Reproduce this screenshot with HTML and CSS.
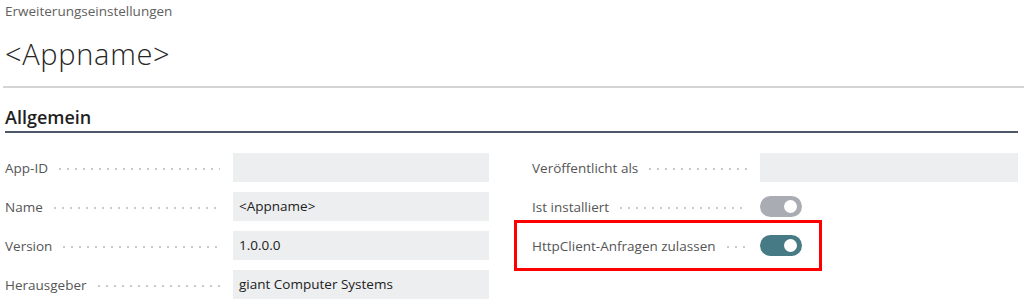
FILE: index.html
```html
<!DOCTYPE html>
<html lang="de">
<head>
<meta charset="utf-8">
<title>Erweiterungseinstellungen</title>
<link rel="stylesheet" href="styles.css">
</head>
<body>
<div class="page">
  <header class="head">
    <div class="crumb">Erweiterungseinstellungen</div>
    <h1 class="title">&lt;Appname&gt;</h1>
  </header>
  <section class="group">
    <h2 class="group-title">Allgemein</h2>
    <div class="cols">
      <div class="col">
        <div class="row"><span class="label">App-ID</span><span class="field"></span></div>
        <div class="row"><span class="label">Name</span><span class="field">&lt;Appname&gt;</span></div>
        <div class="row"><span class="label">Version</span><span class="field">1.0.0.0</span></div>
        <div class="row"><span class="label">Herausgeber</span><span class="field">giant Computer Systems</span></div>
      </div>
      <div class="col">
        <div class="row"><span class="label">Veröffentlicht als</span><span class="field"></span></div>
        <div class="row"><span class="label">Ist installiert</span><span class="switch off"><span class="knob"></span></span></div>
        <div class="row highlight"><span class="label">HttpClient-Anfragen zulassen</span><span class="switch on"><span class="knob"></span></span></div>
      </div>
    </div>
  </section>
</div>
</body>
</html>
```

FILE: styles.css
```css
html, body {
  margin: 0;
  padding: 0;
  background: #ffffff;
}
body {
  font-family: "Open Sans", "Liberation Sans", sans-serif;
  color: #212121;
  overflow: hidden;
}
.page {
  padding: 0 6px 0 5px;
}
.head {
  border-bottom: 2px solid #d5d5d8;
  margin-left: -2px;
  margin-right: -6px;
  padding-left: 2px;
  height: 88px;
  box-sizing: border-box;
}
.crumb {
  font-size: 13.5px;
  color: #616161;
  line-height: 18px;
  padding-top: 2px;
}
.title {
  margin: 0;
  font-weight: 300;
  font-size: 29px;
  letter-spacing: 0.7px;
  line-height: 38px;
  padding-top: 15px;
  color: #262626;
}
.group-title {
  margin: 0;
  font-size: 18px;
  font-weight: 600;
  line-height: 24px;
  padding-top: 17px;
  padding-bottom: 2px;
  border-bottom: 2px solid #4e586b;
  color: #1f1f1f;
}
.cols {
  display: grid;
  grid-template-columns: 484px 486px;
  column-gap: 43px;
  padding-top: 20px;
}
.col {
  display: flex;
  flex-direction: column;
  gap: 10px;
}
.row {
  display: flex;
  align-items: center;
  height: 29px;
}
.label {
  width: 215px;
  margin-right: 13px;
  flex: none;
  display: flex;
  align-items: center;
  font-size: 13.5px;
  color: #555555;
  white-space: nowrap;
  overflow: hidden;
}
.label::after {
  content: "";
  flex: 1;
  height: 2px;
  margin-left: 8px;
  margin-top: 3px;
  background-image: radial-gradient(circle, #cacaca 0.8px, transparent 1.1px);
  background-size: 8px 2px;
  background-repeat: repeat-x;
}
.field {
  flex: 1;
  height: 29px;
  background: #edeef0;
  font-size: 13.5px;
  line-height: 29px;
  padding-left: 6px;
  color: #212121;
}
.switch {
  width: 42px;
  height: 21px;
  border-radius: 11px;
  display: flex;
  align-items: center;
  justify-content: flex-end;
  padding-right: 5px;
  box-sizing: border-box;
}
.switch.off { background: #a9acb3; }
.switch.on { background: #467a84; }
.knob {
  width: 13px;
  height: 13px;
  border-radius: 50%;
  background: #ffffff;
}
.highlight {
  position: relative;
}
.highlight::after {
  content: "";
  position: absolute;
  left: -18px;
  top: -11px;
  width: 308px;
  height: 51px;
  border: 3px solid #ff0000;
  box-sizing: border-box;
}
```
